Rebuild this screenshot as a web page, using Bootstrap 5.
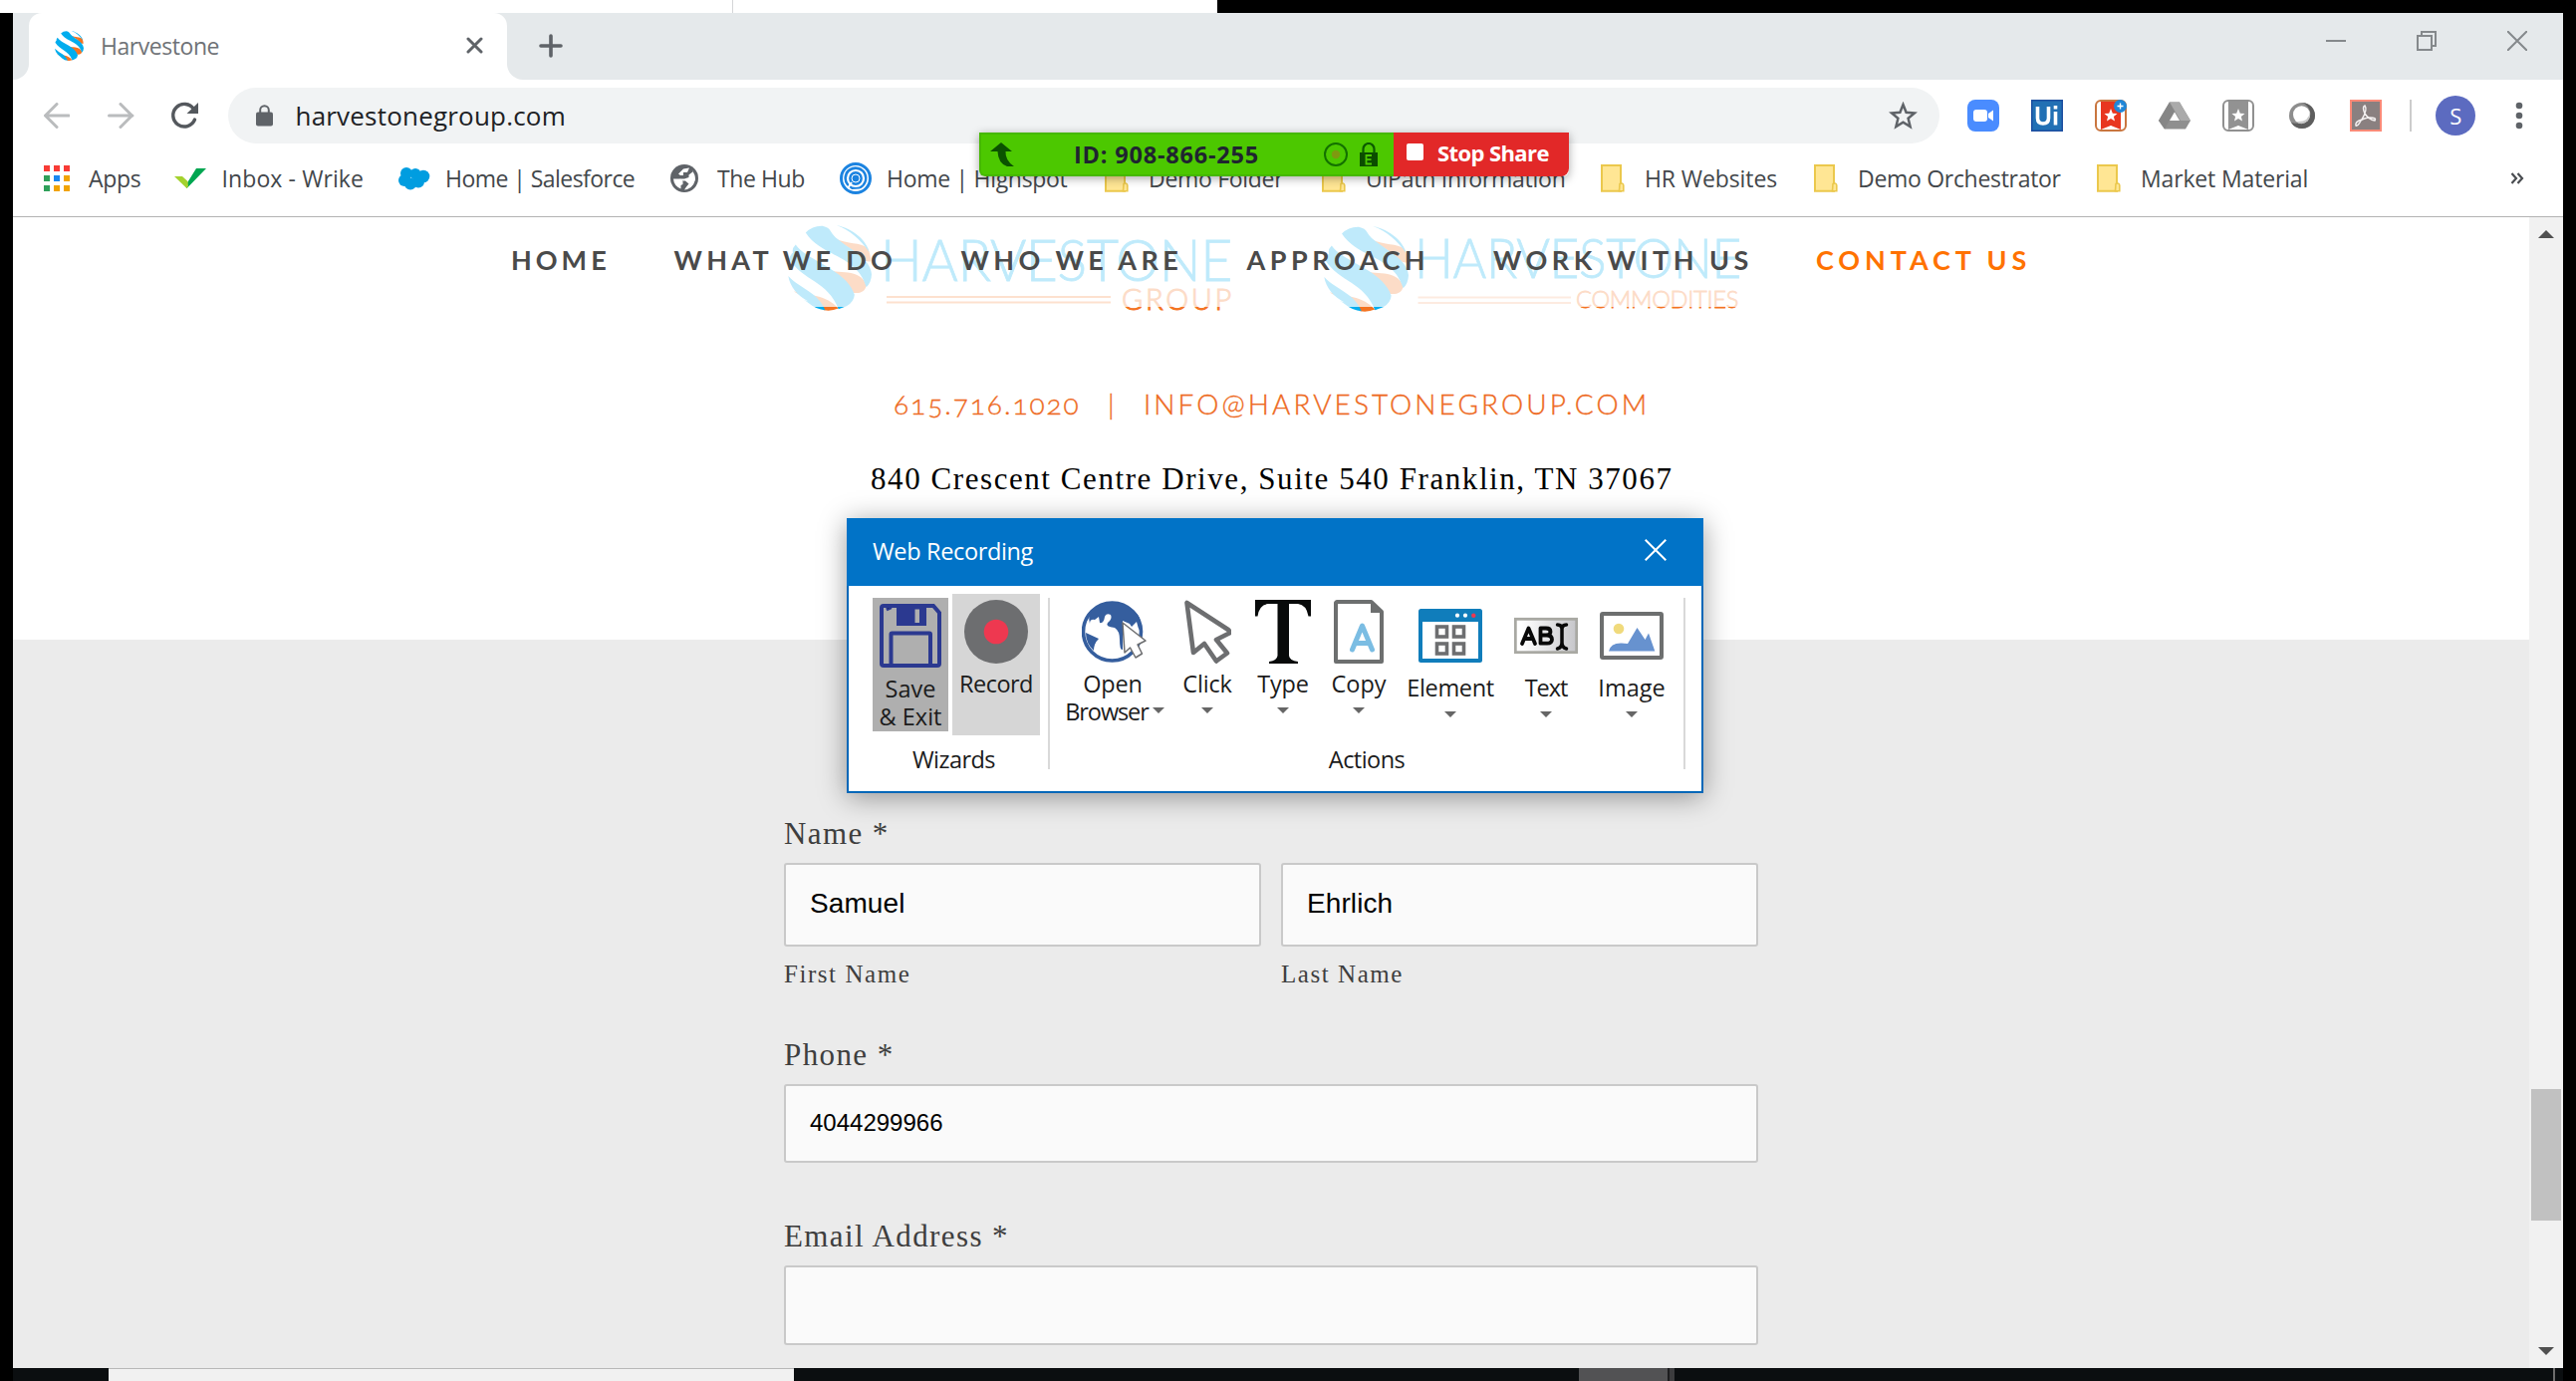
<!DOCTYPE html>
<html lang="en">
<head>
<meta charset="utf-8">
<title>Harvestone</title>
<link href="https://cdn.jsdelivr.net/npm/bootstrap@5.3.0/dist/css/bootstrap.min.css" rel="stylesheet">
<style>
body{background:#000;width:2586px;height:1386px;overflow:hidden;font-family:"Open Sans","Noto Sans",sans-serif;font-size:23px;line-height:28px;letter-spacing:-.35px;color:#3c4043}
svg{display:block;flex:none}
span{white-space:nowrap}
.desk-top{height:13px;width:1222px;background:#fff}
.desk-seam{width:1px;margin-left:735px;background:#d4d6d8}
.browser{margin-left:13px;width:2560px;height:1360px;background:#fff}
/* tab strip */
.tabs{height:67px;background:#e5e9eb}
.edge-tab{width:16px;background:#fff}
.edge-fill{width:16px;height:67px;background:#e5e9eb;border-bottom-right-radius:16px}
.tab{width:480px;height:67px;background:#fff;border-radius:13px 13px 0 0;padding:0 0 2px 26px}
.tab-label{margin-left:17px;color:#6f7377;width:367px;letter-spacing:-.45px}
.strip-rest{width:2064px;height:67px;background:#e5e9eb;border-bottom-left-radius:16px;padding:0 0 1px 32px}
.win-btns{margin:-10px 36px 0 auto;gap:71px}
/* toolbar */
.tools{height:72px;padding:0 40px 0 31px}
.omni{width:1718px;height:56px;border-radius:28px;background:#f1f3f4;margin-left:30px;padding:0 22px 0 28px}
.omni-url{font-size:26px;letter-spacing:.2px;color:#202124;margin-left:22.500px}
.exts{margin-left:28px;gap:32px}
.exts svg{width:32px;height:32px}
.vline{width:2px;height:32px;background:#ccc;margin:0 24px 0 28px}
.avatar{width:40px;height:40px;border-radius:50%;background:#5c6bc0;color:#fff;font-size:22px}
.reload-ico{margin-left:22px}
/* bookmarks */
.marks{height:66px;border-bottom:1px solid #b3b3b3;padding:0 0 11px 31px;color:#43474b}
.marks>div{flex:none}
.marks>div:nth-child(1){width:131px;letter-spacing:-.3px}
.marks>div:nth-child(2){width:224.500px;letter-spacing:.1px}
.marks>div:nth-child(3){width:273px;letter-spacing:-.55px}
.marks>div:nth-child(4){width:170px;letter-spacing:-.4px}
.marks>div:nth-child(5){width:266.500px;letter-spacing:-.3px}
.marks>div:nth-child(6){width:218px;letter-spacing:-.3px}
.marks>div:nth-child(7){width:280px;letter-spacing:-.25px}
.marks>div:nth-child(8){width:214px;letter-spacing:-.1px}
.marks>div:nth-child(9){width:284px;letter-spacing:-.3px}
.marks>div:nth-child(10){width:415px;letter-spacing:-.15px}
.i44{width:45px}.i47{width:47.500px}
/* page */
.view{height:1155px}
.page{width:2526px}
.hero{height:424px;background:#fff}
.logos{padding:8px 0 0 778px}
.logo-gap{width:91px}
.site-nav{top:0;left:0;width:2526px;height:90px;background:rgba(255,255,255,.75);padding:28.500px 0 0 500px;font-family:Lato,sans-serif;font-weight:700;font-size:27px;color:#4a4a4a}
.site-nav span{line-height:28px}
.site-nav span:nth-child(1){width:163.500px;letter-spacing:4px}
.site-nav span:nth-child(2){width:288px;letter-spacing:4.300px}
.site-nav span:nth-child(3){width:287px;letter-spacing:4.400px}
.site-nav span:nth-child(4){width:247.500px;letter-spacing:4.550px}
.site-nav span:nth-child(5){width:324px;letter-spacing:4.500px}
.site-nav span:nth-child(6){letter-spacing:4.900px;color:#ff7200}
.contact{margin:71px 0 0 884px;line-height:40px;font-family:Lato,sans-serif;font-weight:300;font-size:28px;color:#ee6a22;-webkit-text-stroke:.35px #ee6a22;font-variant-numeric:oldstyle-nums}
.contact span:nth-child(1){width:215px;letter-spacing:1.950px}
.contact span:nth-child(2){width:36px}
.contact span:nth-child(3){letter-spacing:3.080px}
.addr{margin:35.500px 0 0 861px;line-height:40px;color:#000;letter-spacing:1.570px}
.serif{font-family:"Liberation Serif",serif;font-size:31px}
.form-zone{height:731px;background:#ebebeb;padding:175px 774px 0 774px;color:#3e3e3e}
.lab{line-height:40px;letter-spacing:1.400px;margin-bottom:9px}
.box{height:79.500px;border:2px solid #c9c9c9;border-radius:3px;background:#fafafa;color:#000;padding-left:24px;font-family:"Liberation Sans",sans-serif;font-size:24px;letter-spacing:0}
.box-tall{height:83.500px;font-size:28px;letter-spacing:.1px;padding-bottom:1px}
.sub{font-size:25px;line-height:30px;letter-spacing:1.550px;margin-top:13px}
.half{width:479px}
.lab-phone{margin-top:46px}
.lab-mail{margin-top:54px}
/* scrollbar */
.sbar{width:34px;background:#f1f1f1;padding:13px 0}
.sthumb{width:30px;height:132px;background:#c1c1c1;margin-bottom:127px}
/* task strip */
.task{height:13px;margin-left:13px;width:2560px;background:#0b0e10}
.task div{height:13px}
.t1{width:96px}.t2{width:688px;background:#f1f1f1;border-top:1px solid #b8b8b8}.t3{width:788px}.t4{width:89px;background:#525254}.t5{width:7px;background:#3c3c3e;border-left:2px solid #1c1c1e}.t6{width:882px}.t7{width:2px;background:#6c6c6c}
/* share bar */
.share{left:983px;top:133px;height:44px;font-weight:700;color:#1f2430;box-shadow:0 2px 10px rgba(0,0,0,.35);border-radius:0 0 6px 6px}
.share-id{width:416px;height:44px;background:#4cc800;border:2px solid #45b800;border-right:0;border-radius:0 0 0 6px;padding-left:9px}
.share-num{font-size:23.500px;letter-spacing:.8px;margin-left:59px;width:251px}
.share-stop{width:176px;height:44px;background:#e22828;color:#fff;border-radius:0 0 8px 0;font-size:22px;letter-spacing:-.6px;padding:0 0 5px 13px}
.stop-sq{width:17px;height:17px;background:#fff;border-radius:2px;margin-right:14px}
/* recorder dialog */
.rec{left:850px;top:520px;width:860px;height:276px;background:#fff;border:2px solid #0067b8;box-shadow:0 4px 26px rgba(0,0,0,.38);font-size:23.500px;color:#1b1b1b}
.rec-head{height:68px;margin:-2px -2px -2px;background:#0173c7;color:#fff;padding:0 37px 5px 26px}
.rec-head span{padding-top:3px}
.grp-w{width:189px;margin-left:11px}
.grp-a{width:636px}
.rec-row{height:146px}
.vsep{width:2px;height:172px;background:#d9d9d9;margin-top:14px}
.b-save{width:76px;height:134px;background:#afafaf;margin:14px 4px 0 13px;padding-top:6px}
.b-rec{width:88px;height:142px;background:#d6d6d6;margin-top:10px;padding-top:6px}
.save-lab{padding-top:6.500px}
.act{padding-top:16px;line-height:28px}
.pic{height:64px;margin-bottom:6px}
.pic-t{height:68px}
.a1{width:104px;margin-left:13px}.a2{width:82px}.a3{width:70px}.a4{width:82px}.a5{width:102px}.a6{width:90px}
.caret{width:0;border:6px solid transparent;border-top-color:#666;border-bottom:0;margin:10px 0}
.caption{line-height:30px;margin-top:15px}
.n5{letter-spacing:-.55px}.n1{letter-spacing:-1.100px}.n2{letter-spacing:-.2px}.z0{letter-spacing:0}
</style>
<script src="https://cdn.jsdelivr.net/npm/bootstrap@5.3.0/dist/js/bootstrap.bundle.min.js"></script>
</head>
<body>
<svg width="0" height="0" class="position-absolute">
  <symbol id="globe-mark" viewBox="65 35 250 253" preserveAspectRatio="none">
    <g fill="#f47321">
      <path d="M82 230C125 242 180 240 216 281Q195 290 172 286C150 250 110 250 82 230Z"/>
      <path d="M172 164C215 182 280 160 299 212C296 236 270 240 243 230C225 195 195 182 172 164Z"/>
      <path d="M205 74C245 92 280 85 303 102Q312 120 313 142C300 145 285 138 275 125C250 98 225 92 205 74Z"/>
    </g>
    <g fill="#00adee">
      <path d="M66 185C105 225 155 232 176 286Q150 284 128 266Q118 258 112 256L126 260C95 245 70 215 66 185Z"/>
      <path d="M88 92C120 140 240 165 264 240Q262 262 240 274L216 283C185 200 110 200 69 135Q72 122 80 116Q76 104 88 92Z"/>
      <path d="M118 57Q138 36 168 37Q188 42 192 52C215 95 310 120 315 180Q314 205 299 218C270 120 165 130 118 57Z"/>
      <path d="M210 35C260 45 300 80 308 115C280 75 250 50 210 35Z"/>
    </g>
  </symbol>
  <symbol id="folder" viewBox="0 0 24 28"><path d="M1 1H20V26.800H1Z" fill="#ffe694" stroke="#ebc84c" stroke-width="2"/><path d="M19 19.500Q22.500 18 22.800 21V26.800H18.500Z" fill="#ffe694" stroke="#ebc84c" stroke-width="1.600"/></symbol>
</svg>

<div class="desk-top d-flex"><div class="desk-seam"></div></div>

<div class="browser">
  <div class="tabs d-flex">
    <div class="edge-tab"><div class="edge-fill"></div></div>
    <div class="tab d-flex align-items-center">
      <svg width="29" height="30"><use href="#globe-mark"/></svg>
      <span class="tab-label">Harvestone</span>
      <svg width="17" height="17" viewBox="0 0 17 17" stroke="#5f6368" stroke-width="3" stroke-linecap="round"><path d="M2 2L15 15M15 2L2 15"/></svg>
    </div>
    <div class="bg-white"><div class="strip-rest d-flex align-items-center">
      <svg width="24" height="24" viewBox="0 0 24 24" stroke="#5f6368" stroke-width="3.600" stroke-linecap="round"><path d="M12 2V22M2 12H22"/></svg>
      <div class="win-btns d-flex align-items-center">
        <svg width="20" height="20" viewBox="0 0 20 20"><path d="M0 10H20" stroke="#85898c" stroke-width="2"/></svg>
        <svg width="20" height="20" viewBox="0 0 20 20" fill="none" stroke="#85898c" stroke-width="2"><path d="M1 5H15V19H1ZM5 5V1H19V15H15"/></svg>
        <svg width="20" height="20" viewBox="0 0 20 20" stroke="#85898c" stroke-width="2"><path d="M0 0L20 20M20 0L0 20"/></svg>
      </div>
    </div></div>
  </div>

  <div class="tools d-flex align-items-center">
    <svg width="26" height="26" viewBox="0 0 26 26" fill="none" stroke="#babcbe" stroke-width="3" stroke-linecap="round" stroke-linejoin="round"><path d="M25 13H2M13 1.500L1.500 13L13 24.500"/></svg>
    <svg class="ms-4" width="42" height="26" viewBox="-14 0 42 26" fill="none" stroke="#babcbe" stroke-width="3" stroke-linecap="round" stroke-linejoin="round"><path d="M1.500 13H25M13 1.500L24.500 13L13 24.500"/></svg>
    <svg class="reload-ico" width="41" height="28" viewBox="-14 0 41 28"><path d="M22.500 7.500A11.300 11.300 0 1 0 23.500 18" fill="none" stroke="#54585d" stroke-width="3.400" stroke-linecap="round"/><path d="M27 1V12H15.500Z" fill="#54585d"/></svg>
    <div class="omni d-flex align-items-center">
      <svg width="17" height="22" viewBox="0 0 17 22"><rect y="7.500" width="17" height="14" rx="2" fill="#5f6368"/><path d="M4.200 8.500V5.500a4.300 4.300 0 0 1 8.600 0V8.500" fill="none" stroke="#5f6368" stroke-width="2"/></svg>
      <span class="omni-url">harvestonegroup.com</span>
      <svg class="ms-auto" width="29" height="28" viewBox="0 0 29 28"><path d="M14.500 3L17.600 10.700L26 11.400L19.600 16.800L21.600 25L14.500 20.600L7.400 25L9.400 16.800L3 11.400L11.400 10.700Z" fill="none" stroke="#5f6368" stroke-width="2.500"/></svg>
    </div>
    <div class="exts d-flex">
      <svg viewBox="0 0 32 32"><rect width="32" height="32" rx="8" fill="#4a8cff"/><rect x="6" y="10" width="14" height="12" rx="3" fill="#fff"/><path d="M21 14L26 10.500V21.500L21 18Z" fill="#fff"/></svg>
      <svg viewBox="0 0 32 32"><rect width="32" height="32" fill="#1c4ea0"/><rect x="1.500" y="1.500" width="29" height="29" fill="#2270b4"/><path d="M6.500 7V18.500Q6.500 24 12 24T17.500 18.500V7" fill="none" stroke="#fff" stroke-width="3.600"/><path d="M24.500 12V25.500M24.500 6V9.500" stroke="#fff" stroke-width="3.600"/></svg>
      <svg viewBox="0 0 32 32"><rect x="1" y="1" width="30" height="30" rx="5" fill="#fff" stroke="#c9763f" stroke-width="2"/><path d="M6 2H26V30L16 26L6 30Z" fill="#e8361f"/><path d="M9 30L16 26.500L23 30Z" fill="#fff"/><path d="M16 9L17.800 13.700L22.500 14L18.900 17L20 21.500L16 19L12 21.500L13.100 17L9.500 14L14.200 13.700Z" fill="#fff"/><circle cx="25.500" cy="6.500" r="6.500" fill="#1f86d8"/><path d="M25.500 3.500V9.500M22.500 6.500H28.500" stroke="#fff" stroke-width="1.400"/></svg>
      <svg viewBox="0 0 32 32"><path d="M11 2.500H21L32 21L27 29.500H6L0 21Z" fill="#8f8f8f"/><path d="M11 2.500L0 21L6 29.500L16 12Z" fill="#868686"/><path d="M11 2.500H21L32 21H22Z" fill="#aaa"/><path d="M16 12.500L21 21H11Z" fill="#fff"/></svg>
      <svg viewBox="0 0 32 32"><rect x="1" y="1" width="30" height="30" rx="5" fill="#fff" stroke="#909090" stroke-width="2"/><path d="M6 2H26V30L16 26L6 30Z" fill="#929292"/><path d="M9 30L16 26.500L23 30Z" fill="#fff"/><path d="M16 9L17.800 13.700L22.500 14L18.900 17L20 21.500L16 19L12 21.500L13.100 17L9.500 14L14.200 13.700Z" fill="#fff"/></svg>
      <svg viewBox="0 0 32 32"><circle cx="16" cy="16" r="13" fill="#8d8d8d"/><path d="M16 3A13 13 0 1 1 5 23Q22 27 24 12Q22 5 16 3Z" fill="#5e5e5e"/><ellipse cx="15.500" cy="15" rx="8.500" ry="8.700" fill="#fff"/><path d="M24 12Q23 23 10 22Q16 27 22 21Q25 17 24 12Z" fill="#c9c9c9"/></svg>
      <svg viewBox="0 0 32 32"><rect x="1" y="1" width="30" height="30" fill="#8a8080" stroke="#fb8a78" stroke-width="2"/><path d="M6 26Q5 22 12 20Q18 10 15 6Q12 7 15 14Q19 20 25 21Q27 18 20 18Q14 18.500 11 21Q8 27 6 26Z" fill="none" stroke="#f4f0f0" stroke-width="1.500"/></svg>
    </div>
    <div class="vline"></div>
    <div class="avatar d-flex align-items-center justify-content-center">S</div>
    <svg class="ms-auto" width="8" height="28" viewBox="0 0 8 28" fill="#5f6368"><circle cx="4" cy="4" r="3.300"/><circle cx="4" cy="14" r="3.300"/><circle cx="4" cy="24" r="3.300"/></svg>
  </div>

  <div class="marks d-flex align-items-center">
    <div class="d-flex align-items-center"><svg class="i44" height="26" viewBox="0 0 45 26"><path d="M0 0h6v6h-6zM10 0h6v6h-6zM20 0h6v6h-6z" fill="#f83b36"/><path d="M0 10h6v6h-6zM0 20h6v6h-6z" fill="#2fa05a"/><path d="M10 10h6v6h-6z" fill="#1a87f0"/><path d="M20 10h6v6h-6zM10 20h6v6h-6zM20 20h6v6h-6z" fill="#f1a300"/></svg><span>Apps</span></div>
    <div class="d-flex align-items-center"><svg class="i47" height="20" viewBox="0 0 47.500 20"><path d="M12.500 20L8 12.500L13 14.500L22 0H32L16 16.500Z" fill="#00a651"/><path d="M0 8H8L13.500 13L14 18L12.500 20Z" fill="#a4d22e"/></svg><span>Inbox - Wrike</span></div>
    <div class="d-flex align-items-center"><svg class="i47" height="26" viewBox="0 -2 47.500 26" fill="#009de0"><circle cx="8" cy="6" r="6"/><circle cx="17" cy="6.500" r="5.500"/><circle cx="25" cy="9" r="6.300"/><circle cx="6" cy="13" r="6"/><circle cx="12" cy="16.500" r="6"/><circle cx="20" cy="14.500" r="6"/></svg><span>Home | Salesforce</span></div>
    <div class="d-flex align-items-center"><svg class="i47" height="28" viewBox="0 0 47.500 28"><circle cx="14" cy="14" r="14" fill="#5f6368"/><path d="M16 3L23 7L18.500 10.500V13L14 14.500H9.500V16.500H15L18.500 19.500L16 22.500L14 25.500Q22.500 24.500 25 15.500Q25 10 22 6.500Z" fill="#fff"/><path d="M22.500 6.500L17 10V13H9.500V16H3.200Q2.500 8 9.500 4L13 3.500V8H16.500L18.500 3.500Z" fill="#5f6368"/><path d="M3 14.500H10L12.500 17V20L10.500 21V24.500Q3.500 21.500 3 14.500ZM13 4.500L19 3.500L17 8H13V11H10L8 9.500Z" fill="#fff"/></svg><span>The Hub</span></div>
    <div class="d-flex align-items-center"><svg class="i47" height="32" viewBox="0 0 47.500 32" fill="none" stroke="#1b83e0"><circle cx="16" cy="16" r="14.500" stroke-width="3"/><path d="M7 23A11.500 11.500 0 1 1 20 26.500L12 27Z" fill="#1b83e0" stroke="none"/><circle cx="16" cy="16" r="8" stroke="#fff" stroke-width="2.200"/><circle cx="16" cy="16" r="4" fill="#1b83e0" stroke="#fff" stroke-width="1"/><path d="M12 20L8 26" stroke="#fff" stroke-width="2"/></svg><span>Home | Highspot</span></div>
    <div class="d-flex align-items-center"><svg width="24" height="28" class="me-3"><use href="#folder"/></svg><span class="ms-1">Demo Folder</span></div>
    <div class="d-flex align-items-center"><svg width="24" height="28" class="me-3"><use href="#folder"/></svg><span class="ms-1">UiPath Information</span></div>
    <div class="d-flex align-items-center"><svg width="24" height="28" class="me-3"><use href="#folder"/></svg><span class="ms-1">HR Websites</span></div>
    <div class="d-flex align-items-center"><svg width="24" height="28" class="me-3"><use href="#folder"/></svg><span class="ms-1">Demo Orchestrator</span></div>
    <div class="d-flex align-items-center"><svg width="24" height="28" class="me-3"><use href="#folder"/></svg><span class="ms-1">Market Material</span></div>
    <svg width="14" height="12" viewBox="0 0 14 12" fill="none" stroke="#4a4d51" stroke-width="2.200"><path d="M1.500 1L6 6L1.500 11M7.500 1L12 6L7.500 11"/></svg>
  </div>

  <div class="view d-flex position-relative">
    <div class="page">
      <div class="hero">
        <div class="logos d-flex">
          <svg width="447" height="88" viewBox="0 0 447 88" font-family="Lato,sans-serif" font-weight="300">
            <use href="#globe-mark" width="84" height="86"/>
            <text x="93" y="56" font-size="58" fill="#00adee" stroke="#00adee" stroke-width=".8" textLength="353" lengthAdjust="spacingAndGlyphs">HARVESTONE</text>
            <path d="M99 72H324M99 77.500H324" stroke="#f47321" stroke-width="2" opacity=".85"/>
            <text x="335" y="85" font-size="29" fill="#f47321" stroke="#f47321" stroke-width="1" textLength="110" lengthAdjust="spacing">GROUP</text>
          </svg>
          <div class="logo-gap"></div>
          <svg width="420" height="88" viewBox="0 0 420 88" font-family="Lato,sans-serif" font-weight="300">
            <use href="#globe-mark" x="0" y="1" width="85" height="86"/>
            <text x="91" y="53" font-size="55" fill="#00adee" stroke="#00adee" stroke-width=".8" textLength="328" lengthAdjust="spacingAndGlyphs">HARVESTONE</text>
            <path d="M94.500 72.500H248M94.500 78H248" stroke="#f47321" stroke-width="2" opacity=".55"/>
            <text x="253" y="83" font-size="24" fill="#f47321" stroke="#f47321" stroke-width=".8" textLength="163" lengthAdjust="spacingAndGlyphs">COMMODITIES</text>
          </svg>
        </div>
        <div class="contact d-flex"><span>615.716.1020</span><span>|</span><span>INFO@HARVESTONEGROUP.COM</span></div>
        <div class="addr serif"><span>840 Crescent Centre Drive, Suite 540 Franklin, TN 37067</span></div>
      </div>
      <div class="form-zone serif">
        <div class="lab">Name *</div>
        <div class="d-flex justify-content-between">
          <div class="half"><div class="box box-tall d-flex align-items-center">Samuel</div><div class="sub">First Name</div></div>
          <div class="half"><div class="box box-tall d-flex align-items-center">Ehrlich</div><div class="sub">Last Name</div></div>
        </div>
        <div class="lab lab-phone">Phone *</div>
        <div class="box d-flex align-items-center">4044299966</div>
        <div class="lab lab-mail">Email Address *</div>
        <div class="box"></div>
      </div>
    </div>
    <div class="sbar d-flex flex-column align-items-center">
      <svg width="16" height="8" viewBox="0 0 16 8"><path d="M8 0L16 8H0Z" fill="#505050"/></svg>
      <div class="sthumb mt-auto"></div>
      <svg width="16" height="8" viewBox="0 0 16 8"><path d="M8 8L16 0H0Z" fill="#505050"/></svg>
    </div>
    <nav class="site-nav position-absolute d-flex"><span>HOME</span><span>WHAT WE DO</span><span>WHO WE ARE</span><span>APPROACH</span><span>WORK WITH US</span><span>CONTACT US</span></nav>
  </div>
</div>

<div class="task d-flex"><div class="t1"></div><div class="t2"></div><div class="t3"></div><div class="t4"></div><div class="t5"></div><div class="t6"></div><div class="t7"></div></div>

<div class="share position-absolute d-flex">
  <div class="share-id d-flex align-items-center">
    <svg width="25" height="24" viewBox="0 0 25 24"><path d="M11 0L22 9H15.500Q15 18 24 24H17Q8 21 7.500 9H0Z" fill="#0b5200"/></svg>
    <span class="share-num">ID: 908-866-255</span>
    <svg width="24" height="24" viewBox="0 0 24 24"><circle cx="12" cy="12" r="11" fill="none" stroke="#137000" stroke-width="2"/><circle cx="12" cy="12" r="4.200" fill="#7f9a10"/></svg>
    <svg class="ms-2" width="26" height="24" viewBox="-4 0 26 24"><rect y="10" width="18" height="14" fill="#0b4d00"/><path d="M3.500 11V6.500a5.500 5.500 0 0 1 11 0V11" fill="none" stroke="#0b5a00" stroke-width="2.200"/><path d="M12 13H6.500V21.500H12M6.500 17.200H11.500" fill="none" stroke="#4cc800" stroke-width="1.800"/></svg>
  </div>
  <div class="share-stop d-flex align-items-center"><div class="stop-sq"></div><span>Stop Share</span></div>
</div>

<div class="rec position-absolute">
  <div class="rec-head d-flex align-items-center justify-content-between">
    <span>Web Recording</span>
    <svg width="22" height="22" viewBox="0 0 22 22" stroke="#fff" stroke-width="2"><path d="M.7 .7L21.300 21.300M21.300 .7L.7 21.300"/></svg>
  </div>
  <div class="d-flex">
    <div class="grp-w text-center">
      <div class="rec-row d-flex">
        <div class="b-save d-flex flex-column align-items-center">
          <svg width="62" height="64" viewBox="0 0 62 64"><path d="M4 2H54L60 9V60Q60 62 58 62H4Q2 62 2 60V4Q2 2 4 2Z" fill="none" stroke="#2b3990" stroke-width="4"/><path d="M17 2H47V22H17ZM35.500 5.500V19H40V5.500Z" fill="#2b3990" fill-rule="evenodd"/><path d="M11.500 62V30.500Q11.500 29.500 12.500 29.500H50Q51 29.500 51 30.500V62" fill="none" stroke="#2b3990" stroke-width="4"/><path d="M7 4L8 6L12 4" stroke="#2b3990" stroke-width="2"/></svg>
          <span class="save-lab z0">Save</span><span class="z0">&amp; Exit</span>
        </div>
        <div class="b-rec d-flex flex-column align-items-center">
          <svg class="pic" width="64" height="64" viewBox="0 0 64 64"><circle cx="32" cy="32" r="32" fill="#6d6e70"/><circle cx="32" cy="32" r="12.300" fill="#ee3850"/></svg>
          <span class="n5">Record</span>
        </div>
      </div>
      <div class="caption n5">Wizards</div>
    </div>
    <div class="vsep"></div>
    <div class="grp-a text-center">
      <div class="rec-row d-flex">
        <div class="act a1 d-flex flex-column align-items-center">
          <svg class="pic" width="66" height="64" viewBox="0 0 66 64"><circle cx="30.500" cy="32" r="29" fill="#fff" stroke="#355e9e" stroke-width="3.600"/><path d="M9 13Q18 2 32 2.500Q50 4 58 18L59 32Q56 28 55 22L50 27L48 24L41 21L41 50Q38 51 38 40Q38 31 33 28Q23 27 26 23Q31 19 29 15Q24 13 23 17Q22 24 18 23L17 17L13 20Q8 19 8 24Q6 16 9 13ZM4 33L17 39Q12 44 12 51Q4 44 4 33Z" fill="#355e9e"/><path d="M41 23L43 53L48.500 48L54 58L60.500 54L56 45L64 41Z" fill="#fff" stroke="#6d6e70" stroke-width="1.500" stroke-linejoin="round"/></svg>
          <span class="n2 pe-1">Open</span>
          <div class="d-flex"><span class="n1">Browser</span><span class="caret ms-1 me-0"></span></div>
        </div>
        <div class="act a2 d-flex flex-column align-items-center">
          <svg class="pic" width="48" height="64" viewBox="0 0 48 64"><path d="M3.500 3L10 53L21 44L33 61.500L44 53.500L33 40L46 33.500Q46.500 31 45 30Z" fill="#fff" stroke="#6d6e70" stroke-width="4.600" stroke-linejoin="round"/></svg>
          <span class="n2">Click</span><span class="caret"></span>
        </div>
        <div class="act a3 d-flex flex-column align-items-center">
          <svg class="pic" width="56" height="64" viewBox="0 0 56 64"><path d="M0 0H56V16.500H53.500Q51.500 5 43 4H34V56Q34.500 61 43 62V64H14V62Q22 61 22.500 56V4H13Q4 5 2.500 16.500H0Z" fill="#080a0a"/></svg>
          <span class="n2">Type</span><span class="caret"></span>
        </div>
        <div class="act a4 d-flex flex-column align-items-center">
          <svg class="pic" width="50" height="64" viewBox="0 0 50 64"><path d="M3 2H37.500L48 12V62H2V3Z" fill="#fff" stroke="#6d6f6f" stroke-width="4" stroke-linejoin="round"/><path d="M37 1L49 13H37Z" fill="#6d6f6f"/><path d="M18.500 50L28.500 26L38.500 50M22 43.500H35" fill="none" stroke="#7bbde3" stroke-width="5" stroke-linecap="round" stroke-linejoin="round"/></svg>
          <span class="z0">Copy</span><span class="caret"></span>
        </div>
        <div class="act a5 d-flex flex-column align-items-center">
          <svg class="pic pic-t" width="64" height="68" viewBox="0 0 64 68"><rect y="9" width="64" height="54" rx="2.500" fill="#107dbb"/><rect x="4" y="22" width="56" height="37" fill="#fff"/><circle cx="39" cy="15.700" r="2.100" fill="#fff"/><circle cx="47" cy="15.700" r="2.100" fill="#fff"/><circle cx="55.300" cy="15.700" r="2.200" fill="#ee3850"/><g fill="none" stroke="#6d6e70" stroke-width="3.600"><rect x="18.500" y="27" width="10" height="10"/><rect x="35.500" y="27" width="10" height="10"/><rect x="18.500" y="44" width="10" height="10"/><rect x="35.500" y="44" width="10" height="10"/></g></svg>
          <span>Element</span><span class="caret"></span>
        </div>
        <div class="act a6 d-flex flex-column align-items-center">
          <svg class="pic pic-t" width="64" height="68" viewBox="0 0 64 68"><defs><linearGradient id="tg"><stop offset=".1" stop-color="#fff"/><stop offset="1" stop-color="#c6c6ca"/></linearGradient></defs><rect x="1.300" y="19.300" width="61.400" height="33.400" fill="url(#tg)" stroke="#a9a9a3" stroke-width="2.800"/><g fill="none" stroke="#080808" stroke-width="3.800" stroke-linecap="round" stroke-linejoin="round"><path d="M8 44L14.500 28.500L21 44M10.500 39H18.500"/><path d="M26.500 28.500V43.700H33Q38 43.500 38 39.700T33 35.500H26.500M26.500 28.500H32Q36.500 28.500 36.500 32T32 35.500"/><path d="M43.500 25Q48 25 48 29.500V43Q48 48 43.500 49M52.500 25Q48 25 48 29.500M48 43Q48 48 52.500 49" stroke-width="3.500"/></g></svg>
          <span class="n1">Text</span><span class="caret"></span>
        </div>
        <div class="act a2 d-flex flex-column align-items-center">
          <svg class="pic pic-t" width="64" height="68" viewBox="0 0 64 68"><rect x="2" y="14" width="60" height="44" rx="1" fill="#fff" stroke="#6d6f6f" stroke-width="4"/><circle cx="19" cy="29" r="5.300" fill="#f0da7c"/><path d="M9 51.500Q11 43 22 43.500L28 44L37.500 28L45.500 40L49 33.500L55.300 51.500Z" fill="#6792cf"/></svg>
          <span class="z0">Image</span><span class="caret"></span>
        </div>
      </div>
      <div class="caption n5">Actions</div>
    </div>
    <div class="vsep"></div>
  </div>
</div>
</body>
</html>
